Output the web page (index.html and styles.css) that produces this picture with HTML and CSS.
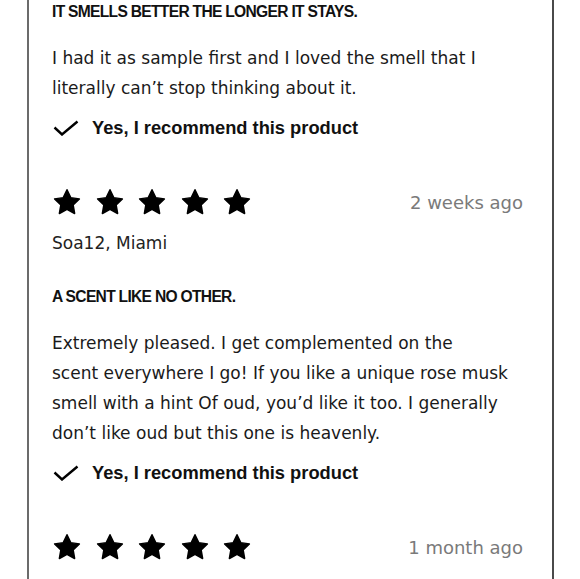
FILE: index.html
```html
<!DOCTYPE html>
<html>
<head>
<meta charset="utf-8">
<link rel="stylesheet" href="styles.css">
</head>
<body>
<div class="card">
  <div class="review first">
    <h3 class="title">IT SMELLS BETTER THE LONGER IT STAYS.</h3>
    <p class="text">I had it as sample first and I loved the smell that I<br>literally can’t stop thinking about it.</p>
    <div class="rec">
      <svg class="check" viewBox="0 0 26 16"><path d="M1.5 7.5 L9 14.5 L24.5 1.5" fill="none" stroke="#000" stroke-width="2.4"/></svg>
      <span>Yes, I recommend this product</span>
    </div>
  </div>
  <div class="review">
    <div class="head">
      <div class="stars">
        <svg viewBox="0 0 24 24"><path d="M12 2.2l3 6.3 6.9 1-5 4.8 1.2 6.9-6.1-3.3-6.1 3.3 1.2-6.9-5-4.8 6.9-1z"/></svg>
        <svg viewBox="0 0 24 24"><path d="M12 2.2l3 6.3 6.9 1-5 4.8 1.2 6.9-6.1-3.3-6.1 3.3 1.2-6.9-5-4.8 6.9-1z"/></svg>
        <svg viewBox="0 0 24 24"><path d="M12 2.2l3 6.3 6.9 1-5 4.8 1.2 6.9-6.1-3.3-6.1 3.3 1.2-6.9-5-4.8 6.9-1z"/></svg>
        <svg viewBox="0 0 24 24"><path d="M12 2.2l3 6.3 6.9 1-5 4.8 1.2 6.9-6.1-3.3-6.1 3.3 1.2-6.9-5-4.8 6.9-1z"/></svg>
        <svg viewBox="0 0 24 24"><path d="M12 2.2l3 6.3 6.9 1-5 4.8 1.2 6.9-6.1-3.3-6.1 3.3 1.2-6.9-5-4.8 6.9-1z"/></svg>
      </div>
      <span class="date">2 weeks ago</span>
    </div>
    <div class="author">Soa12, Miami</div>
    <h3 class="title">A SCENT LIKE NO OTHER.</h3>
    <p class="text">Extremely pleased. I get complemented on the<br>scent everywhere I go! If you like a unique rose musk<br>smell with a hint Of oud, you’d like it too. I generally<br>don’t like oud but this one is heavenly.</p>
    <div class="rec">
      <svg class="check" viewBox="0 0 26 16"><path d="M1.5 7.5 L9 14.5 L24.5 1.5" fill="none" stroke="#000" stroke-width="2.4"/></svg>
      <span>Yes, I recommend this product</span>
    </div>
  </div>
  <div class="review">
    <div class="head">
      <div class="stars">
        <svg viewBox="0 0 24 24"><path d="M12 2.2l3 6.3 6.9 1-5 4.8 1.2 6.9-6.1-3.3-6.1 3.3 1.2-6.9-5-4.8 6.9-1z"/></svg>
        <svg viewBox="0 0 24 24"><path d="M12 2.2l3 6.3 6.9 1-5 4.8 1.2 6.9-6.1-3.3-6.1 3.3 1.2-6.9-5-4.8 6.9-1z"/></svg>
        <svg viewBox="0 0 24 24"><path d="M12 2.2l3 6.3 6.9 1-5 4.8 1.2 6.9-6.1-3.3-6.1 3.3 1.2-6.9-5-4.8 6.9-1z"/></svg>
        <svg viewBox="0 0 24 24"><path d="M12 2.2l3 6.3 6.9 1-5 4.8 1.2 6.9-6.1-3.3-6.1 3.3 1.2-6.9-5-4.8 6.9-1z"/></svg>
        <svg viewBox="0 0 24 24"><path d="M12 2.2l3 6.3 6.9 1-5 4.8 1.2 6.9-6.1-3.3-6.1 3.3 1.2-6.9-5-4.8 6.9-1z"/></svg>
      </div>
      <span class="date">1 month ago</span>
    </div>
  </div>
</div>
</body>
</html>
```
FILE: styles.css
```css
html, body {
  margin: 0;
  padding: 0;
  background: #fff;
  overflow: hidden;
}
body {
  font-family: "DejaVu Sans", sans-serif;
  color: #111;
}
.card {
  margin-left: 27px;
  width: 471px;
  height: 579px;
  border-left: 2px solid #6b6b6b;
  border-right: 2px solid #4a4a4a;
  padding: 0 29px 0 23px;
  box-sizing: content-box;
}
.review {
  padding-top: 47px;
}
.review.first {
  padding-top: 0;
}
.title {
  margin: 0;
  font-family: "Liberation Sans", sans-serif;
  font-weight: 700;
  font-size: 15.6px;
  line-height: 24px;
  letter-spacing: -0.7px;
  color: #111;
}
.text {
  margin: 19px 0 0;
  font-size: 17px;
  line-height: 30px;
  color: #1a1a1a;
  white-space: nowrap;
}
.rec {
  display: flex;
  align-items: center;
  gap: 13px;
  margin-top: 13px;
  height: 24px;
  font-family: "Liberation Sans", sans-serif;
  font-weight: 700;
  font-size: 18.3px;
}
.check {
  width: 26px;
  height: 16px;
  margin-left: 1px;
}
.head {
  display: flex;
  justify-content: space-between;
  align-items: center;
  height: 30px;
}
.stars {
  display: flex;
  gap: 12.5px;
}
.stars svg {
  width: 30px;
  height: 30px;
  fill: #000;
}
.stars svg path {
  stroke: #000;
  stroke-width: 1.2;
  stroke-linejoin: round;
}
.date {
  font-size: 18px;
  color: #7a7a7a;
}
.author {
  margin-top: 15px;
  font-size: 17px;
  line-height: 22px;
  color: #222;
}
.review .author + .title {
  margin-top: 31px;
}
```
